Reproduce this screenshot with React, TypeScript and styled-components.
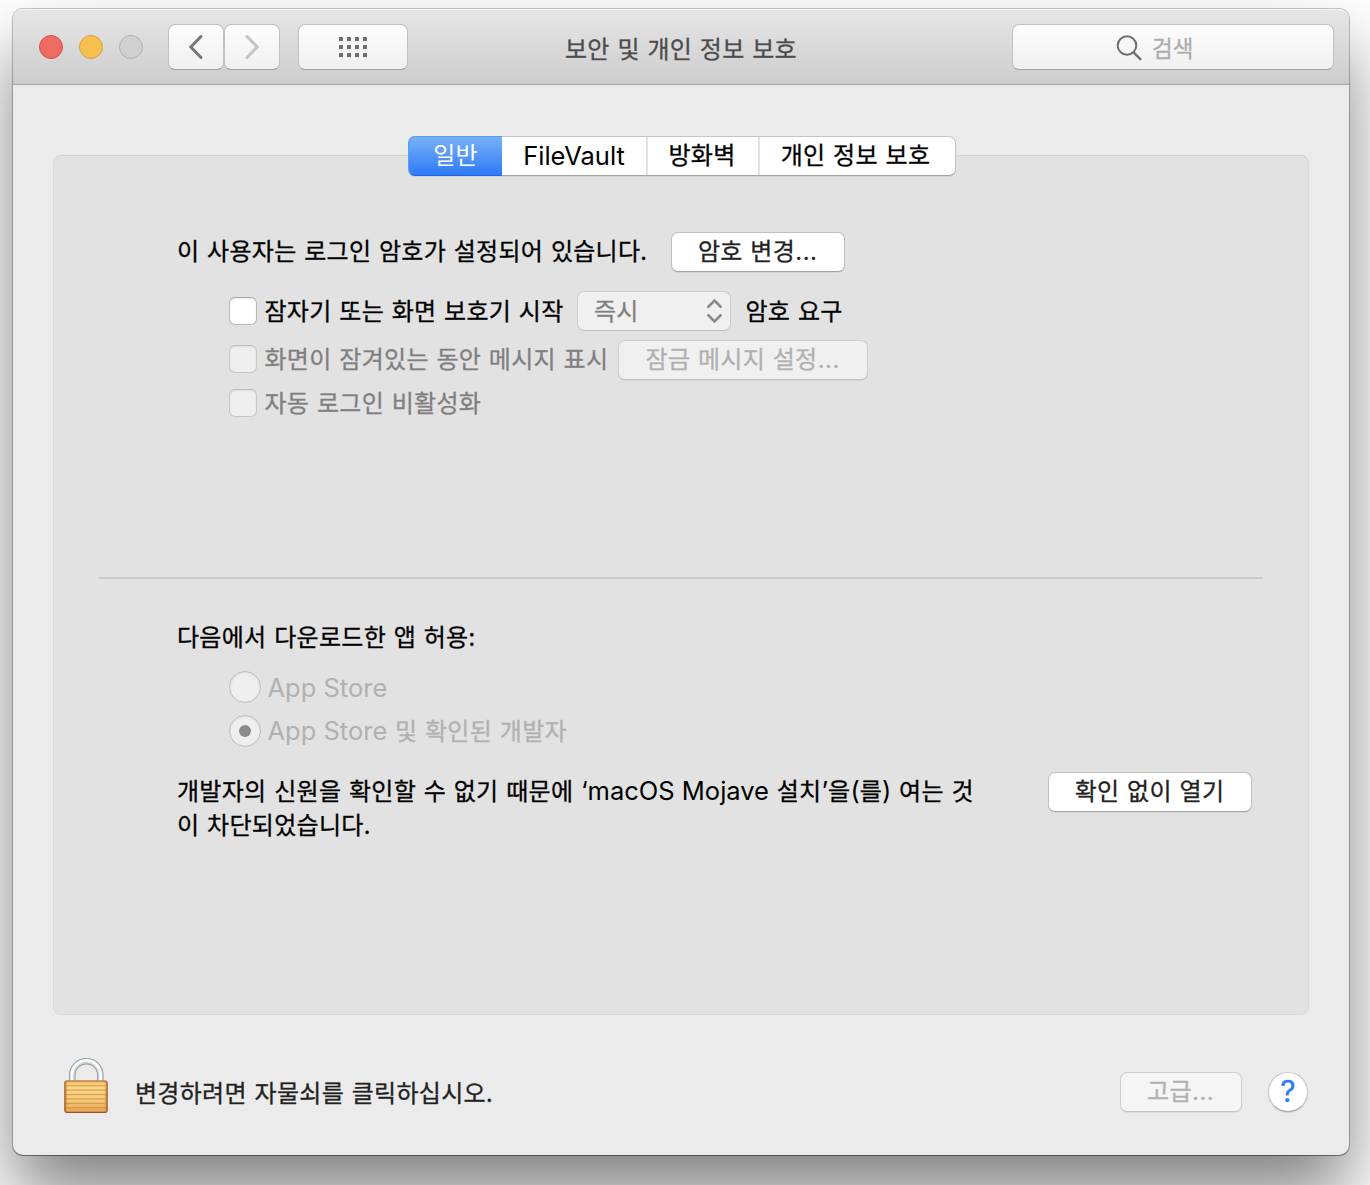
import React from "react";
import styled, { createGlobalStyle, css } from "styled-components";

const GlobalStyle = createGlobalStyle`
  *, *::before, *::after { box-sizing: border-box; }
  body {
    margin: 0;
    background: #fff;
    overflow: hidden;
    font-family: "Noto Sans CJK KR", "Noto Sans", sans-serif;
    font-size: 24px;
    letter-spacing: 0.29px;
    word-spacing: 2px;
    color: #000;
    -webkit-text-stroke: 0.3px currentColor;
  }
  button { font: inherit; letter-spacing: inherit; word-spacing: inherit; margin: 0; padding: 0; }
`;

const Desktop = styled.div`
  width: 1370px;
  height: 1185px;
  padding: 9px 21px 30px 13px;
  overflow: hidden;
  background: #fff;
`;

const Window = styled.main`
  display: flex;
  flex-direction: column;
  width: 1336px;
  height: 1146px;
  border-radius: 10px;
  background: #ebebeb;
  box-shadow: 0 0 0 1px rgba(0, 0, 0, 0.22), 0 1px 1px rgba(0, 0, 0, 0.3),
    0 40px 70px rgba(0, 0, 0, 0.49);
`;

const TitleBar = styled.header`
  display: flex;
  align-items: flex-start;
  height: 76px;
  padding: 15px 15px 0 26px;
  border-radius: 10px 10px 0 0;
  border-bottom: 1px solid #a9a9a9;
  background: linear-gradient(#e6e6e6, #cdcdcd);
  box-shadow: inset 0 1px 0 #f5f5f5, inset 0 -1px 0 #c3c3c3;
`;

const Lights = styled.div`
  display: flex;
  gap: 16px;
  padding-top: 11px;
  margin-right: 25px;
`;

const Light = styled.span<{ $fill: string; $edge: string }>`
  width: 24px;
  height: 24px;
  border-radius: 50%;
  border: 1px solid ${(p) => p.$edge};
  background: ${(p) => p.$fill};
`;

const barControl = css`
  display: flex;
  align-items: center;
  justify-content: center;
  height: 46px;
  border: 1px solid #c2c2c2;
  border-bottom-color: #a2a2a2;
  border-radius: 7px;
  background: linear-gradient(#fdfdfd, #f0f0f0);
  background-clip: padding-box;
`;

const BarButton = styled.button<{ $width: number; $gap?: number }>`
  ${barControl}
  width: ${(p) => p.$width}px;
  margin-right: ${(p) => p.$gap ?? 0}px;
`;

const Title = styled.h1`
  flex: 1;
  margin: 0;
  padding-left: 157px;
  font-size: 24px;
  font-weight: 400;
  line-height: 48px;
  color: #4c4c4c;
`;

const Search = styled.div`
  ${barControl}
  justify-content: flex-start;
  width: 322px;
  gap: 10px;
  padding-left: 103px;
  color: #acacac;
  font-size: 22.5px;
  letter-spacing: 0;
  line-height: 44px;
  svg { margin-top: 2px; }
`;

const Content = styled.div`
  display: flex;
  flex-direction: column;
  flex: 1;
  padding: 70px 40px 0;
`;

const Panel = styled.section`
  display: flex;
  flex-direction: column;
  height: 860px;
  border: 1px solid #d9d9d9;
  border-top-color: #d2d2d2;
  border-radius: 8px;
  background: #e2e2e2;
`;

const Tabs = styled.nav`
  display: flex;
  align-self: flex-start;
  width: 548px;
  height: 40px;
  margin: -20px 0 0 354px;
  border: 1px solid #c4c4c4;
  border-bottom-color: #a6a6a6;
  border-radius: 7px;
  background: #fff;
  box-shadow: 0 1px 1px rgba(0, 0, 0, 0.08);
`;

const Tab = styled.button<{ $width: number; $active?: boolean; $latin?: boolean }>`
  width: ${(p) => p.$width}px;
  height: 38px;
  padding: ${(p) => (p.$latin ? "0 0 2px 0" : "0 2px 4px 0")};
  border: 0;
  border-right: 2px solid #e3e3e3;
  background: transparent;
  color: #000;
  line-height: 34px;
  &:last-child { border-right: 0; padding-right: 4px; }
  ${(p) =>
    p.$active &&
    css`
      height: 40px;
      margin: -1px 0 -1px -1px;
      padding-right: 0;
      border: 1px solid #5c9cf0;
      border-right: 0;
      border-bottom-color: #1f66ee;
      border-radius: 7px 0 0 7px;
      background: linear-gradient(#76b1f6, #2f7af8);
      color: #fff;
      -webkit-text-stroke: 0;
    `}
`;

const Latin = styled.span`
  font-family: Inter, "Liberation Sans", sans-serif;
  font-size: 25.5px;
  line-height: 1;
  letter-spacing: 0;
  word-spacing: 0;
  -webkit-text-stroke: 0;
`;

const Upper = styled.div`
  display: flex;
  flex-direction: column;
  height: 401px;
  padding: 56px 0 0 123px;
`;

const Row = styled.div<{ $top?: number; $indent?: number; $tone?: string }>`
  display: flex;
  align-items: center;
  height: 40px;
  margin-top: ${(p) => p.$top ?? 0}px;
  padding-left: ${(p) => p.$indent ?? 0}px;
  color: ${(p) => p.$tone ?? "#000"};
  white-space: nowrap;
`;

const Label = styled.span<{ $width?: number; $line?: number }>`
  flex: none;
  width: ${(p) => (p.$width ? `${p.$width}px` : "auto")};
  height: 40px;
  line-height: ${(p) => p.$line ?? 36}px;
`;

const PushButton = styled.button<{ $width: number; $disabled?: boolean; $pale?: boolean }>`
  flex: none;
  width: ${(p) => p.$width}px;
  height: 40px;
  padding: 0 1px 4px 0;
  border: 1px solid ${(p) => (p.$disabled ? "#cfcfcf" : "#c0c0c0")};
  border-bottom-color: ${(p) => (p.$disabled ? "#c3c3c3" : "#a2a2a2")};
  border-radius: 7px;
  background: ${(p) => (p.$pale ? "#f5f5f5" : p.$disabled ? "#f0f0f0" : "#fff")};
  color: ${(p) => (p.$disabled ? "#b0b0b0" : "#222")};
  line-height: 34px;
  white-space: nowrap;
  box-shadow: 0 1px 1px rgba(0, 0, 0, 0.06);
`;

const CheckBox = styled.span<{ $disabled?: boolean }>`
  flex: none;
  width: 28px;
  height: 28px;
  margin-right: 7.5px;
  margin-bottom: ${(p) => (p.$disabled ? 2 : 0)}px;
  border: 1px solid ${(p) => (p.$disabled ? "#c6c6c6" : "#b8b8b8")};
  border-top-color: ${(p) => (p.$disabled ? "#bebebe" : "#a6a6a6")};
  border-radius: 6px;
  background: ${(p) => (p.$disabled ? "#efefef" : "#fff")};
  box-shadow: inset 0 1px 2px rgba(0, 0, 0, 0.08);
`;

const PopUp = styled.div`
  display: flex;
  flex: none;
  align-items: center;
  justify-content: space-between;
  width: 154px;
  height: 40px;
  margin-right: 14.5px;
  padding: 0 7px 0 16px;
  border: 1px solid #cccccc;
  border-bottom-color: #c0c0c0;
  border-radius: 7px;
  background: #f0f0f0;
  color: #808080;
`;

const PopUpValue = styled.span`
  height: 38px;
  line-height: 35px;
`;

const Divider = styled.hr`
  flex: none;
  width: 1164px;
  height: 2px;
  margin: 0 0 0 45px;
  border: 0;
  background: #cccccc;
`;

const Lower = styled.div`
  display: flex;
  flex-direction: column;
  padding: 38px 56px 0 123px;
`;

const Radio = styled.span`
  display: flex;
  flex: none;
  align-items: center;
  justify-content: center;
  width: 32px;
  height: 32px;
  margin-right: 6.5px;
  border: 1px solid #bdbdbd;
  border-radius: 50%;
  background: #efefef;
  box-shadow: inset 0 1px 3px rgba(0, 0, 0, 0.08);
`;

const RadioDot = styled.span`
  width: 12px;
  height: 12px;
  border-radius: 50%;
  background: #8b8b8b;
`;

const Blocked = styled.div`
  display: flex;
  justify-content: space-between;
  align-items: flex-start;
  margin-top: 21px;
`;

const Message = styled.p`
  width: 808px;
  margin: 1px 0 0;
`;

const MessageLine = styled.span`
  display: block;
  height: 34px;
  line-height: 34px;
  white-space: nowrap;
`;

const Footer = styled.footer`
  display: flex;
  align-items: center;
  height: 60px;
  margin-top: 47px;
  padding: 0 1px 0 10px;
  color: #222;
`;

const FooterText = styled.span`
  flex: 1;
  padding-left: 26px;
  line-height: 40px;
`;

const Help = styled.button`
  display: flex;
  align-items: center;
  justify-content: center;
  width: 40px;
  height: 40px;
  margin-left: 26px;
  padding-bottom: 2px;
  border: 1px solid #c6c6c6;
  border-bottom-color: #a8a8a8;
  border-radius: 50%;
  background: #fff;
  color: #2d7cf6;
  font: 400 30px/36px Inter, sans-serif;
  letter-spacing: 0;
  box-shadow: 0 1px 1px rgba(0, 0, 0, 0.1);
`;

const Chevron = ({ flip, color }: { flip?: boolean; color: string }) => (
  <svg width="16" height="26" viewBox="0 0 16 26" fill="none">
    <path
      d={flip ? "M3 2.5 13.2 13 3 23.5" : "M13 2.5 2.8 13 13 23.5"}
      stroke={color}
      strokeWidth="3"
      strokeLinecap="round"
      strokeLinejoin="miter"
    />
  </svg>
);

const GridIcon = () => (
  <svg width="28" height="20" viewBox="0 0 28 20" fill="#6e6e6e" shapeRendering="crispEdges">
    {[0, 8, 16].map((y) => [0, 8, 16, 24].map((x) => <rect key={`${x}-${y}`} x={x} y={y} width="4" height="4" />))}
  </svg>
);

const SearchIcon = () => (
  <svg width="26" height="26" viewBox="0 0 26 26" fill="none" stroke="#6e6e6e" strokeWidth="2">
    <circle cx="11" cy="10.5" r="9.3" />
    <path d="M17.6 17.4 25 24.8" strokeWidth="2.4" />
  </svg>
);

const Stepper = () => (
  <svg width="17" height="26" viewBox="0 0 18 26" fill="none" stroke="#8b8b8b" strokeWidth="2.8" strokeLinecap="round">
    <path d="M2.5 8.5 9 2 15.5 8.5M2.5 17.5 9 24 15.5 17.5" />
  </svg>
);

const PadlockArt = styled.svg`
  flex: none;
  margin-top: -13px;
`;

const Padlock = () => (
  <PadlockArt width="46" height="57" viewBox="0 0 46 58">
    <defs>
      <linearGradient id="brass" x2="0" y2="1">
        <stop offset="0" stopColor="#f0b458" />
        <stop offset=".15" stopColor="#fbdf93" />
        <stop offset=".6" stopColor="#f8d084" />
        <stop offset="1" stopColor="#e6a650" />
      </linearGradient>
      <linearGradient id="sides">
        <stop offset="0" stopColor="#9a5313" stopOpacity=".75" />
        <stop offset=".08" stopColor="#c97a24" stopOpacity=".05" />
        <stop offset=".92" stopColor="#c97a24" stopOpacity=".05" />
        <stop offset="1" stopColor="#9a5313" stopOpacity=".75" />
      </linearGradient>
    </defs>
    <path d="M9 27V18.5a14.3 14.3 0 0 1 28.6 0V27" fill="none" stroke="#929ba0" strokeWidth="6.6" />
    <path d="M9 27V18.5a14.3 14.3 0 0 1 28.6 0V27" fill="none" stroke="#ccd4d9" strokeWidth="4.8" />
    <path d="M8.7 27V18.2a14.6 14.6 0 0 1 29.2 0V27" fill="none" stroke="#fafcfd" strokeWidth="2.6" />
    <rect x="1" y="24" width="44" height="33" rx="2.5" fill="url(#brass)" />
    {[28.5, 33, 37.5, 42, 46.5, 51].map((y) => (
      <rect key={y} x="2" y={y} width="42" height="1.4" fill="#cf8630" opacity=".6" />
    ))}
    <rect x="1" y="24" width="44" height="33" rx="2.5" fill="url(#sides)" />
    <rect x="1.5" y="24.5" width="43" height="32" rx="2.5" fill="none" stroke="#a96a38" strokeWidth="1.1" />
    <path d="M3 56.3H43" stroke="#96502c" strokeWidth="1.2" />
  </PadlockArt>
);

export default function App() {
  return (
    <>
      <GlobalStyle />
      <Desktop>
        <Window>
          <TitleBar>
            <Lights>
              <Light $fill="#ed6b60" $edge="#d75047" />
              <Light $fill="#f5c04f" $edge="#d9a13c" />
              <Light $fill="#d0d0d0" $edge="#b1b1b1" />
            </Lights>
            <BarButton $width={56}><Chevron color="#777" /></BarButton>
            <BarButton $width={56} $gap={18}><Chevron flip color="#c4c4c4" /></BarButton>
            <BarButton $width={110}><GridIcon /></BarButton>
            <Title>보안 및 개인 정보 보호</Title>
            <Search><SearchIcon />검색</Search>
          </TitleBar>
          <Content>
            <Panel>
              <Tabs>
                <Tab $width={94} $active>일반</Tab>
                <Tab $width={146} $latin><Latin>FileVault</Latin></Tab>
                <Tab $width={112}>방화벽</Tab>
                <Tab $width={195}>개인 정보 보호</Tab>
              </Tabs>
              <Upper>
                <Row>
                  <Label $width={494}>이 사용자는 로그인 암호가 설정되어 있습니다.</Label>
                  <PushButton $width={174}>암호 변경<Latin>...</Latin></PushButton>
                </Row>
                <Row $top={19} $indent={52}>
                  <CheckBox />
                  <Label $width={312.5} $line={38}>잠자기 또는 화면 보호기 시작</Label>
                  <PopUp><PopUpValue>즉시</PopUpValue><Stepper /></PopUp>
                  <Label $line={38}>암호 요구</Label>
                </Row>
                <Row $top={9} $indent={52} $tone="#7f7f7f">
                  <CheckBox $disabled />
                  <Label $width={353.5}>화면이 잠겨있는 동안 메시지 표시</Label>
                  <PushButton $width={250} $disabled>잠금 메시지 설정<Latin>...</Latin></PushButton>
                </Row>
                <Row $top={4} $indent={52} $tone="#7f7f7f">
                  <CheckBox $disabled />
                  <Label>자동 로그인 비활성화</Label>
                </Row>
              </Upper>
              <Divider />
              <Lower>
                <Row><Label $line={38}>다음에서 다운로드한 앱 허용:</Label></Row>
                <Row $top={10} $indent={52} $tone="#b1b1b1">
                  <Radio />
                  <Label $line={39}><Latin>App Store</Latin></Label>
                </Row>
                <Row $top={4} $indent={52} $tone="#b1b1b1">
                  <Radio><RadioDot /></Radio>
                  <Label $line={38}><Latin>App Store</Latin> 및 확인된 개발자</Label>
                </Row>
                <Blocked>
                  <Message>
                    <MessageLine>
                      개발자의 신원을 확인할 수 없기 때문에 <Latin>‘macOS Mojave</Latin> 설치<Latin>’</Latin>을<Latin>(</Latin>를<Latin>)</Latin> 여는 것
                    </MessageLine>
                    <MessageLine>이 차단되었습니다.</MessageLine>
                  </Message>
                  <PushButton $width={204}>확인 없이 열기</PushButton>
                </Blocked>
              </Lower>
            </Panel>
            <Footer>
              <Padlock />
              <FooterText>변경하려면 자물쇠를 클릭하십시오.</FooterText>
              <PushButton $width={122} $disabled $pale>고급<Latin>...</Latin></PushButton>
              <Help>?</Help>
            </Footer>
          </Content>
        </Window>
      </Desktop>
    </>
  );
}
